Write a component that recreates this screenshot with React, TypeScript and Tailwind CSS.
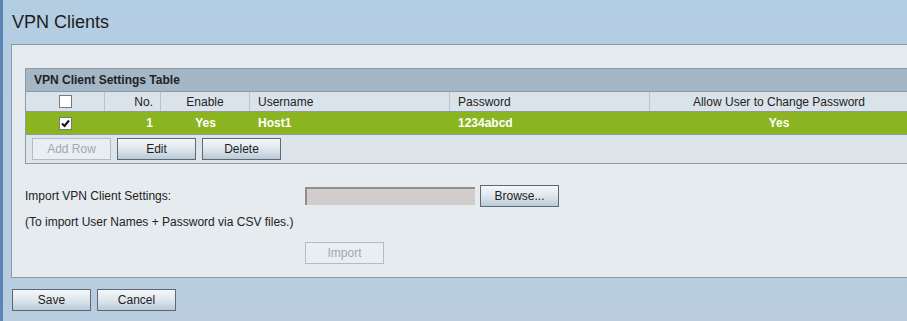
import React from "react";

const font = { fontFamily: '"Liberation Sans", Arial, sans-serif' };

function Btn({ label, disabled }: { label: string; disabled?: boolean }) {
  return (
    <button
      className={
        disabled
          ? "w-[79px] h-[22px] border border-[#b4bcc3] bg-[#e9eef2] text-[12px] text-[#a3a8ad]"
          : "w-[79px] h-[22px] border border-[#5c6873] bg-gradient-to-b from-[#f4f7f9] via-[#dfe7ed] to-[#b9cad7] text-[12px] text-[#1e1e1e]"
      }
    >
      {label}
    </button>
  );
}

function Box({ checked }: { checked?: boolean }) {
  return (
    <span className="inline-flex w-[13px] h-[13px] border border-[#7a7a7a] bg-white items-center justify-center">
      {checked && (
        <svg width="9" height="9" viewBox="0 0 9 9">
          <path d="M1 4.5 L3.5 7 L8 1.5" stroke="#111" strokeWidth="2" fill="none" />
        </svg>
      )}
    </span>
  );
}

export default function App() {
  return (
    <div
      className="w-[907px] h-[321px] overflow-hidden border-l-[3px] border-[#5b85b5] bg-gradient-to-b from-[#b3cde2] to-[#b9cce0] text-[#222]"
      style={font}
    >
      <h1 className="pl-[9px] pt-[12px] h-[44px] text-[18px] leading-[20px] text-[#1c1c1c]">VPN Clients</h1>
      <div className="ml-[8px] w-[1000px] h-[234px] border border-[#8c9aa5] bg-[#e5ebef] pl-[13px] pt-[23px]">
        <div className="border border-[#8c9aa5] bg-[#dde4ea]">
          <div className="h-[23px] bg-[#a3b7c7] border-b border-[#8c9aa5] pl-[8px] text-[12px] font-bold leading-[23px]">
            VPN Client Settings Table
          </div>
          <div className="flex h-[20px] text-[12px] leading-[20px] bg-[#dbe3ea] border-b border-[#8c9aa5]">
            <div className="w-[79px] flex items-center justify-center border-r border-[#b7c3cd]">
              <Box />
            </div>
            <div className="w-[56px] text-right pr-[7px] border-r border-[#b7c3cd]">No.</div>
            <div className="w-[89px] text-center border-r border-[#b7c3cd]">Enable</div>
            <div className="w-[200px] pl-[8px] border-r border-[#b7c3cd]">Username</div>
            <div className="w-[200px] pl-[8px] border-r border-[#b7c3cd]">Password</div>
            <div className="w-[258px] text-center">Allow User to Change Password</div>
          </div>
          <div className="flex h-[23px] text-[12px] leading-[22px] bg-[#8ab521] text-white font-bold border-b border-[#8c9aa5]">
            <div className="w-[79px] flex items-center justify-center">
              <Box checked />
            </div>
            <div className="w-[56px] text-right pr-[8px]">1</div>
            <div className="w-[89px] text-center">Yes</div>
            <div className="w-[200px] pl-[8px]">Host1</div>
            <div className="w-[200px] pl-[8px]">1234abcd</div>
            <div className="w-[258px] text-center">Yes</div>
          </div>
          <div className="flex gap-[6px] px-[6px] pt-[3px] h-[28px]">
            <Btn label="Add Row" disabled />
            <Btn label="Edit" />
            <Btn label="Delete" />
          </div>
        </div>
        <div className="flex items-center mt-[21px] h-[22px] text-[12px]">
          <span className="w-[280px]">Import VPN Client Settings:</span>
          <span className="w-[170px] h-[18px] bg-[#d2cdcc] border-t-2 border-l-2 border-[#8f8f8f]" />
          <span className="ml-[5px]">
            <Btn label="Browse..." />
          </span>
        </div>
        <div className="mt-[5px] text-[12px] leading-[20px]">(To import User Names + Password via CSV files.)</div>
        <div className="mt-[8px] ml-[280px]">
          <Btn label="Import" disabled />
        </div>
      </div>
      <div className="flex gap-[6px] mt-[11px] ml-[9px]">
        <Btn label="Save" />
        <Btn label="Cancel" />
      </div>
    </div>
  );
}
